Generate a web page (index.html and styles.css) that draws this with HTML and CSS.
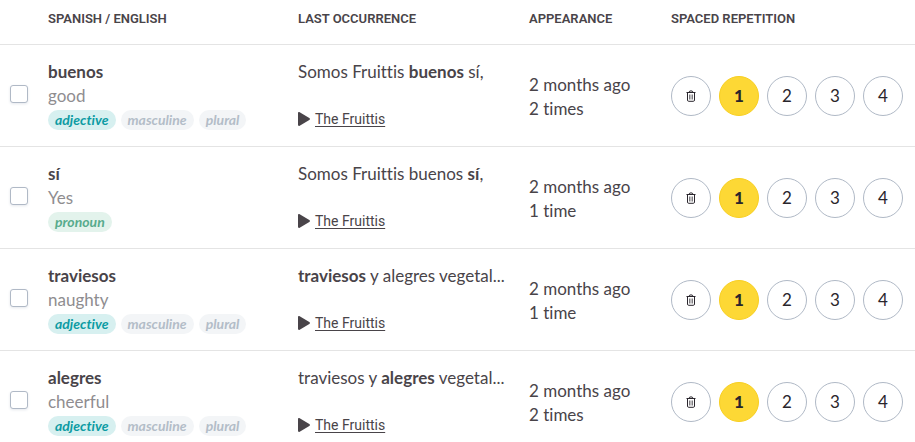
FILE: index.html
```
<!DOCTYPE html>
<html lang="en">
<head>
  <meta charset="UTF-8" />
  <meta name="viewport" content="width=device-width, initial-scale=1.0"/>
  <title>Vocabulary</title>
  <link rel="stylesheet" href="styles.css">
</head>
<body>
  <svg class="sprite" aria-hidden="true">
    <symbol id="trash" viewBox="0 0 10 12">
      <path d="M.5 2.5h9M3 2.2C3 .4 7 .4 7 2.2M1.5 2.8v7.3c0 .8.4 1.2 1.2 1.2h4.6c.8 0 1.2-.4 1.2-1.2V2.8" fill="none" stroke="currentColor"/>
      <path d="M3.5 4.5v5M5 4.5v5M6.5 4.5v5" fill="none" stroke="currentColor" stroke-width=".6"/>
    </symbol>
    <symbol id="play" viewBox="0 0 12 14">
      <path d="M0 1.2C0 .2.8-.2 1.7.3l9.6 5.8c.9.5.9 1.3 0 1.8l-9.6 5.8c-.9.5-1.7.1-1.7-.9z" fill="currentColor"/>
    </symbol>
  </svg>

  <table class="words">
    <thead>
      <tr>
        <th class="col-check"></th>
        <th class="col-word">SPANISH / ENGLISH</th>
        <th class="col-last">LAST OCCURRENCE</th>
        <th class="col-seen">APPEARANCE</th>
        <th class="col-level">SPACED REPETITION</th>
      </tr>
    </thead>
    <tbody>
      <tr>
        <td><input class="check" type="checkbox" aria-label="Select buenos"></td>
        <td class="entry">
          <div class="word">buenos</div>
          <div class="translation">good</div>
          <div class="tags"><span class="tag adjective">adjective</span><span class="tag">masculine</span><span class="tag">plural</span></div>
        </td>
        <td>
          <div class="sentence">Somos Fruittis <b>buenos</b> sí,</div>
          <div class="source"><svg class="play"><use href="#play"/></svg><a href="#">The Fruittis</a></div>
        </td>
        <td class="seen">2 months ago<br>2 times</td>
        <td>
          <div class="levels">
            <button class="level" aria-label="Delete buenos"><svg class="trash"><use href="#trash"/></svg></button>
            <button class="level active">1</button>
            <button class="level">2</button>
            <button class="level">3</button>
            <button class="level">4</button>
          </div>
        </td>
      </tr>
      <tr>
        <td><input class="check" type="checkbox" aria-label="Select sí"></td>
        <td class="entry">
          <div class="word">sí</div>
          <div class="translation">Yes</div>
          <div class="tags"><span class="tag pronoun">pronoun</span></div>
        </td>
        <td>
          <div class="sentence">Somos Fruittis buenos <b>sí</b>,</div>
          <div class="source"><svg class="play"><use href="#play"/></svg><a href="#">The Fruittis</a></div>
        </td>
        <td class="seen">2 months ago<br>1 time</td>
        <td>
          <div class="levels">
            <button class="level" aria-label="Delete sí"><svg class="trash"><use href="#trash"/></svg></button>
            <button class="level active">1</button>
            <button class="level">2</button>
            <button class="level">3</button>
            <button class="level">4</button>
          </div>
        </td>
      </tr>
      <tr>
        <td><input class="check" type="checkbox" aria-label="Select traviesos"></td>
        <td class="entry">
          <div class="word">traviesos</div>
          <div class="translation">naughty</div>
          <div class="tags"><span class="tag adjective">adjective</span><span class="tag">masculine</span><span class="tag">plural</span></div>
        </td>
        <td>
          <div class="sentence"><b>traviesos</b> y alegres vegetal...</div>
          <div class="source"><svg class="play"><use href="#play"/></svg><a href="#">The Fruittis</a></div>
        </td>
        <td class="seen">2 months ago<br>1 time</td>
        <td>
          <div class="levels">
            <button class="level" aria-label="Delete traviesos"><svg class="trash"><use href="#trash"/></svg></button>
            <button class="level active">1</button>
            <button class="level">2</button>
            <button class="level">3</button>
            <button class="level">4</button>
          </div>
        </td>
      </tr>
      <tr>
        <td><input class="check" type="checkbox" aria-label="Select alegres"></td>
        <td class="entry">
          <div class="word">alegres</div>
          <div class="translation">cheerful</div>
          <div class="tags"><span class="tag adjective">adjective</span><span class="tag">masculine</span><span class="tag">plural</span></div>
        </td>
        <td>
          <div class="sentence">traviesos y <b>alegres</b> vegetal...</div>
          <div class="source"><svg class="play"><use href="#play"/></svg><a href="#">The Fruittis</a></div>
        </td>
        <td class="seen">2 months ago<br>2 times</td>
        <td>
          <div class="levels">
            <button class="level" aria-label="Delete alegres"><svg class="trash"><use href="#trash"/></svg></button>
            <button class="level active">1</button>
            <button class="level">2</button>
            <button class="level">3</button>
            <button class="level">4</button>
          </div>
        </td>
      </tr>
    </tbody>
  </table>
</body>
</html>
```
FILE: styles.css
```
body {
  margin: 0;
  overflow: hidden;
  background: #fff;
  color: #494449;
  font-family: Lato, sans-serif;
  font-size: 17px;
  font-variant-ligatures: none;
  line-height: 24px;
}
.sprite {
  display: none;
}
.words {
  width: 100%;
  table-layout: fixed;
  border-collapse: collapse;
}
th {
  padding: 7px 0 13px;
  border-bottom: 1px solid #e4e4e4;
  font-family: Roboto, sans-serif;
  font-size: 13px;
  font-weight: 600;
  text-align: left;
  white-space: nowrap;
}
td {
  padding: 15px 0;
  border-bottom: 1px solid #e4e4e4;
  vertical-align: middle;
}
.col-check {
  width: 48px;
}
.col-word {
  width: 250px;
}
.col-last {
  width: 231px;
}
.col-seen {
  width: 142px;
}
.check {
  display: block;
  box-sizing: border-box;
  width: 18px;
  height: 18px;
  margin: 0 0 4px 10px;
  appearance: none;
  background: #fff;
  border: 1px solid #b0b9c6;
  border-radius: 3px;
  box-shadow: 0 1px 3px #e4e7ec;
}
.check:checked {
  background: #fdd835;
}
.word, b {
  font-weight: bold;
}
.entry {
  padding: 14px 0 16px;
}
.translation {
  color: #8f8d90;
}
.tags {
  display: flex;
  gap: 5px;
  padding-top: 2px;
}
.tag {
  padding: 0 7px;
  border-radius: 10px;
  background: #f3f5f7;
  color: #b3bdc8;
  font-size: 14px;
  font-style: italic;
  font-weight: bold;
  line-height: 20px;
}
.adjective {
  background: #d7f0f0;
  color: #0c9ba3;
}
.pronoun {
  background: #e3f3ec;
  color: #58ab8c;
}
.sentence {
  padding-bottom: 23px;
  white-space: nowrap;
}
.source {
  display: flex;
  align-items: center;
  gap: 5px;
  font-family: Roboto, sans-serif;
  font-size: 14px;
}
.source a {
  color: inherit;
  text-underline-offset: 2px;
}
.play {
  width: 12px;
  height: 14px;
}
.seen {
  padding-top: 17px;
}
.levels {
  display: flex;
  gap: 8px;
}
.level {
  display: flex;
  align-items: center;
  justify-content: center;
  box-sizing: border-box;
  width: 40px;
  height: 40px;
  padding: 0;
  border: 1px solid #b0b9c6;
  border-radius: 50%;
  background: #fff;
  color: #29252c;
  font: inherit;
  cursor: pointer;
}
.level.active {
  border-color: #f8cf20;
  background: #fdd835;
  font-weight: 900;
}
.trash {
  width: 10px;
  height: 12px;
}
```
